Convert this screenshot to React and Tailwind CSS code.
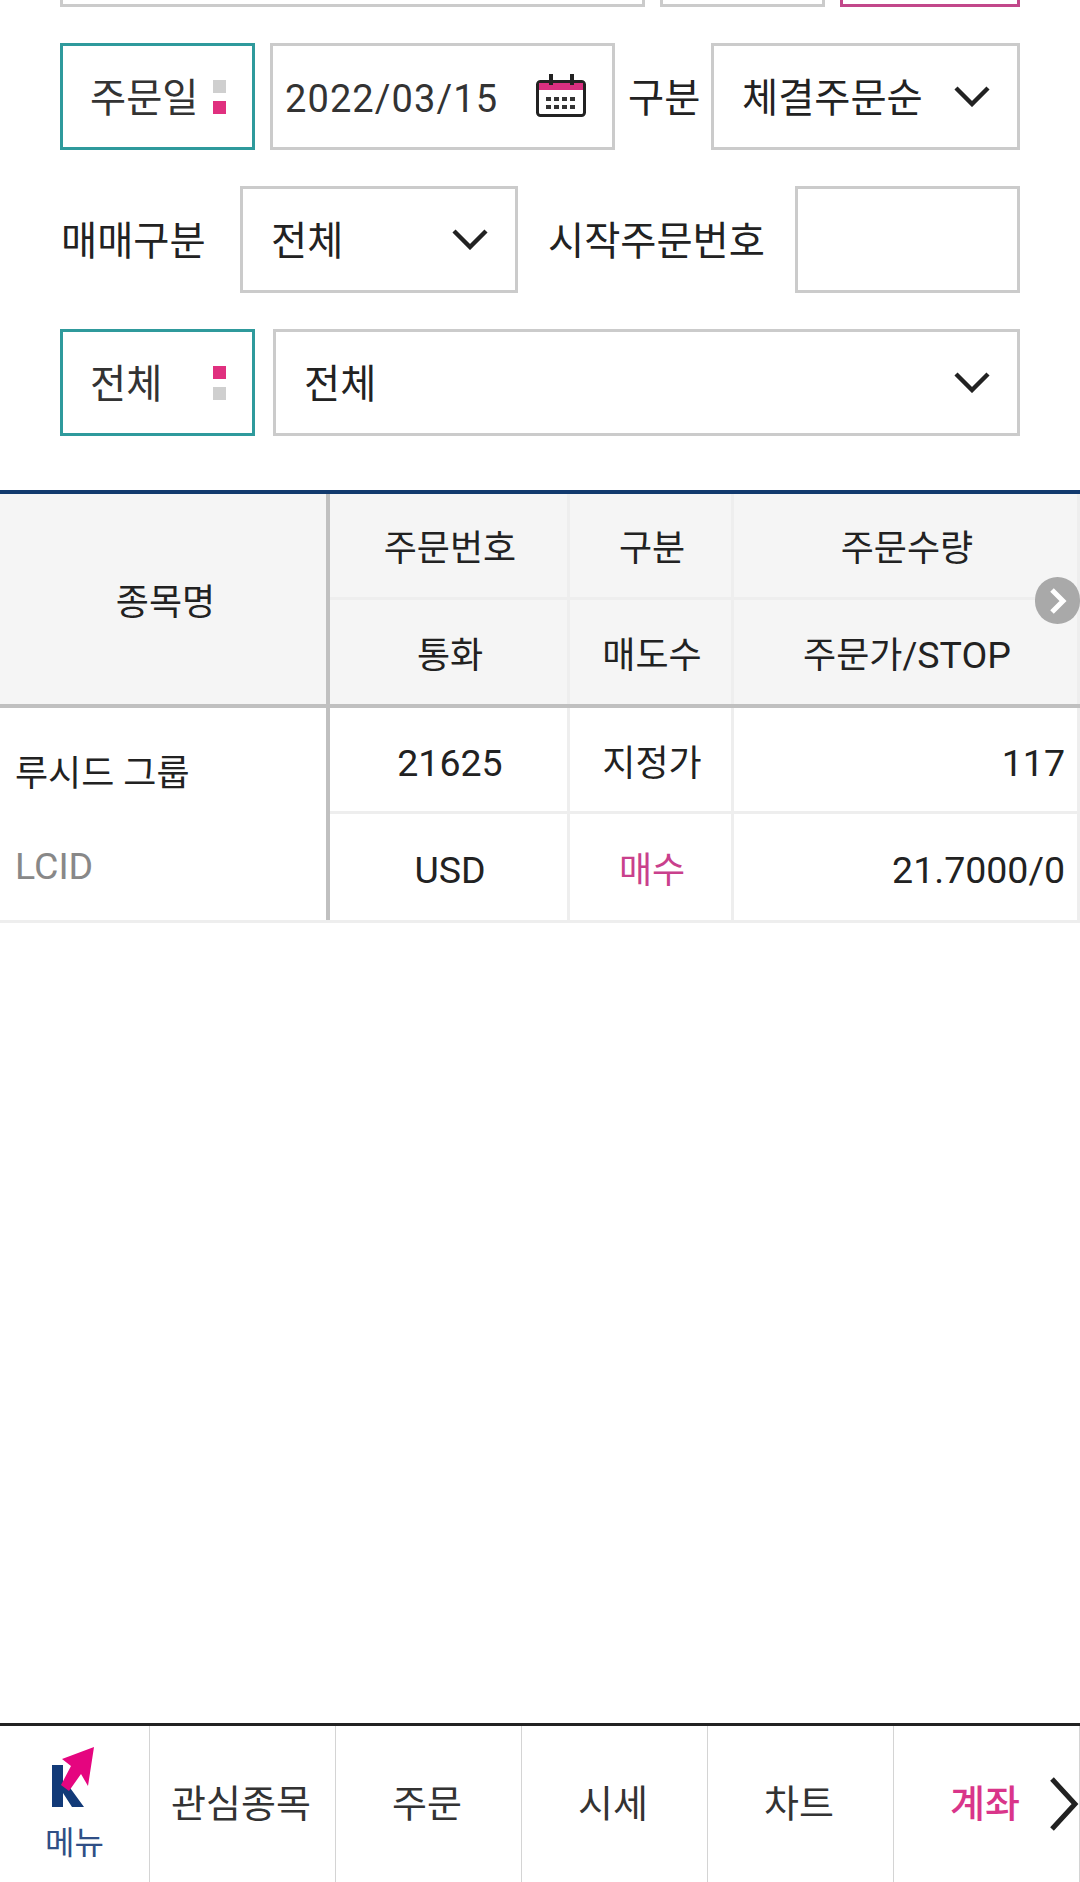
import React from "react";

const Chevron = () => (
  <svg width="36" height="22" viewBox="0 0 36 22" className="shrink-0 mb-[2px]" fill="none">
    <path d="M2 3 L18 19 L34 3" stroke="#222" strokeWidth="4.4" />
  </svg>
);

const Dots = ({ first }) => (
  <div className="flex flex-col gap-[8px] shrink-0">
    <span className={first === "pink" ? "w-[13px] h-[13px] bg-[#e0307f]" : "w-[13px] h-[13px] bg-[#cfcfcf]"} />
    <span className={first === "pink" ? "w-[13px] h-[13px] bg-[#cfcfcf]" : "w-[13px] h-[13px] bg-[#e0307f]"} />
  </div>
);

const Teal = ({ label, first }) => (
  <div className="w-[195px] h-[107px] shrink-0 border-[3px] border-[#2f9a9c] flex items-center justify-between pl-[27px] pr-[26px] text-[#333]">
    <span className="pt-[6px]">{label}</span>
    <Dots first={first} />
  </div>
);

const Select = ({ label, className }) => (
  <div className={"h-[107px] border-[3px] border-[#cbcbcb] flex items-center justify-between pl-[28px] pr-[27px] " + className}>
    <span className="pt-[6px]">{label}</span>
    <Chevron />
  </div>
);

const Calendar = () => (
  <svg width="50" height="43" viewBox="0 0 50 43" className="shrink-0 mb-[2px]">
    <rect x="1.5" y="7.5" width="47" height="34" rx="3" fill="#fff" stroke="#222" strokeWidth="3" />
    <rect x="3" y="9" width="44" height="7" fill="#d92f80" />
    <rect x="13" y="0" width="4" height="11" fill="#222" />
    <rect x="34" y="0" width="4" height="11" fill="#222" />
    {[10, 18, 26, 34].map((x) => (
      <React.Fragment key={x}>
        <rect x={x} y="23" width="5" height="4" fill="#333" />
        <rect x={x} y="31" width="5" height="4" fill="#333" />
      </React.Fragment>
    ))}
  </svg>
);

const Cell = ({ children, w, right, pink, top }) => (
  <div
    className={
      "h-full shrink-0 flex items-center border-r-[3px] border-[#eeeeee] " +
      w + " " +
      (top ? "pt-[9px] " : "pt-[7px] ") +
      (right ? "justify-end pr-[12px] " : "justify-center pl-[3px] ") +
      (pink ? "text-[#c9408c]" : "text-[#222]")
    }
  >
    {children}
  </div>
);

const Row = ({ a, b, c, h, pinkB, right, border, top }) => (
  <div className={"flex " + h + (border ? " border-b-[3px] border-[#eeeeee]" : "")}>
    <Cell w="w-[240px]" top={top}>{a}</Cell>
    <Cell w="w-[164px]" pink={pinkB} top={top}>{b}</Cell>
    <Cell w="w-[346px]" right={right} top={top}>{c}</Cell>
  </div>
);

const Num = ({ children }) => <span className="text-[37.5px]">{children}</span>;

const Logo = () => (
  <svg width="48" height="62" viewBox="0 0 48 62" className="block">
    <path d="M0 18 H11 V36 L22 18 H28 L16 38 L32 60 H20 L11 46 V60 H0 Z" fill="#123a78" />
    <path d="M42 0 L10 12 L19 19 L9 38 L17 44 L29 27 L36 39 Z" fill="#e5057f" />
  </svg>
);

const NavCell = ({ label, pink, w }) => (
  <div className={"h-full shrink-0 flex items-center justify-center border-r border-[#d4d4d4] pr-[3px] " + w + (pink ? " text-[#d9358a] font-medium" : " text-[#333]")}>
    {label}
  </div>
);

export default function App() {
  return (
    <div className="w-[1080px] h-[1882px] bg-white relative flex flex-col overflow-hidden font-[family-name:Roboto,'Noto_Sans_CJK_KR',sans-serif] text-[#222] text-[39.3px] leading-none">
      {/* clipped previous row */}
      <div className="h-[7px] px-[60px] flex gap-[15px]">
        <div className="w-[585px] border-[3px] border-t-0 border-[#cbcbcb]" />
        <div className="w-[165px] border-[3px] border-t-0 border-[#cbcbcb]" />
        <div className="w-[180px] border-[3px] border-t-0 border-[#c2478a]" />
      </div>

      <div className="mt-[36px] px-[60px] flex items-center">
        <Teal label="주문일" first="gray" />
        <div className="ml-[15px] w-[345px] h-[107px] border-[3px] border-[#cbcbcb] flex items-center justify-between pl-[12px] pr-[26px] text-[#333]">
          <span className="pt-[4px] text-[38px] tracking-[1.1px]">2022/03/15</span>
          <Calendar />
        </div>
        <span className="ml-[13px] w-[69px] shrink-0 whitespace-nowrap pt-[6px]">구분</span>
        <Select label="체결주문순" className="ml-[14px] w-[309px]" />
      </div>

      <div className="mt-[36px] pl-[61px] pr-[60px] flex items-center">
        <span className="w-[179px] shrink-0 whitespace-nowrap pt-[6px]">매매구분</span>
        <Select label="전체" className="w-[278px]" />
        <span className="ml-[30px] w-[247px] shrink-0 whitespace-nowrap pt-[6px]">시작주문번호</span>
        <div className="w-[225px] h-[107px] border-[3px] border-[#cbcbcb]" />
      </div>

      <div className="mt-[36px] px-[60px] flex items-center">
        <Teal label="전체" first="pink" />
        <Select label="전체" className="ml-[18px] flex-1" />
      </div>

      {/* table */}
      <div className="mt-[54px] border-t-[4px] border-[#123a6e] text-[36px] relative">
        <div className="flex h-[214px] bg-[#f5f5f5] border-b-[4px] border-[#c0c0c0]">
          <div className="w-[330px] shrink-0 border-r-[4px] border-[#c0c0c0] flex items-center justify-center pt-[7px] pl-[5px]">종목명</div>
          <div className="flex-1 flex flex-col">
            <Row a="주문번호" b="구분" c="주문수량" h="h-[106px]" border />
            <Row a="통화" b="매도수" c={<span>주문가/<Num>STOP</Num></span>} h="h-[104px]" />
          </div>
        </div>
        <div className="flex h-[215px] border-b-[3px] border-[#eeeeee]">
          <div className="w-[330px] shrink-0 border-r-[4px] border-[#c0c0c0] flex flex-col pl-[15px] pt-[48px] gap-[56px]">
            <span>루시드 그룹</span>
            <span className="text-[#888888] text-[37.5px]">LCID</span>
          </div>
          <div className="flex-1 flex flex-col">
            <Row a={<Num>21625</Num>} b="지정가" c={<Num>117</Num>} h="h-[106px]" right border top />
            <Row a={<Num>USD</Num>} b="매수" c={<Num>21.7000/0</Num>} h="h-[106px]" right pinkB />
          </div>
        </div>
        <div className="absolute right-0 top-[83px] w-[45px] h-[47px] rounded-full bg-[#a9a9a9] flex items-center justify-center">
          <svg width="20" height="28" viewBox="0 0 20 28" fill="none">
            <path d="M4 3 L15 14 L4 25" stroke="#fff" strokeWidth="5" />
          </svg>
        </div>
      </div>

      {/* bottom nav */}
      <div className="mt-auto h-[159px] border-t-[3px] border-[#222222] flex relative text-[38px]">
        <div className="w-[150px] h-full shrink-0 border-r border-[#d4d4d4] flex flex-col items-center pt-[21px]">
          <div className="ml-[2px]">
            <Logo />
          </div>
          <span className="text-[32px] text-[#2f4f86] mt-[18px]">메뉴</span>
        </div>
        <NavCell label="관심종목" w="w-[186px]" />
        <NavCell label="주문" w="w-[186px]" />
        <NavCell label="시세" w="w-[186px]" />
        <NavCell label="차트" w="w-[186px]" />
        <NavCell label="계좌" w="w-[186px]" pink />
        <svg width="32" height="56" viewBox="0 0 32 56" fill="none" className="absolute right-0 top-[50px]">
          <path d="M4 3 L27 28 L4 53" stroke="#222" strokeWidth="5" />
        </svg>
      </div>
    </div>
  );
}
